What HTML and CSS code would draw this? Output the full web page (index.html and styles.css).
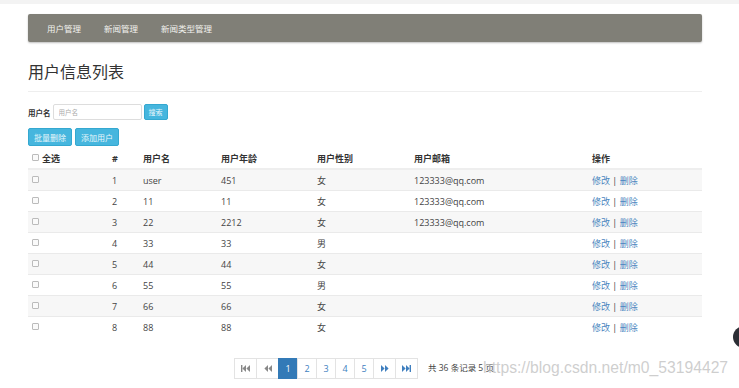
FILE: index.html
```html
<!DOCTYPE html>
<html lang="zh-CN">
<head>
    <meta charset="UTF-8">
    <title>用户信息列表</title>
    <link rel="stylesheet" href="styles.css">
</head>
<body>
    <div class="topband"></div>
    <div class="container">
        <div class="navbar">
            <a href="#">用户管理</a>
            <a href="#">新闻管理</a>
            <a href="#">新闻类型管理</a>
        </div>

        <h1>用户信息列表</h1>

        <div class="search-row">
            <label>用户名</label>
            <input type="text" class="search-input" placeholder="用户名">
            <button class="btn btn-info btn-small">搜索</button>
        </div>

        <div class="btn-row">
            <button class="btn btn-info">批量删除</button>
            <button class="btn btn-info">添加用户</button>
        </div>

        <table class="user-table">
            <thead>
                <tr>
                    <th class="col-check"><span class="check"></span>全选</th>
                    <th class="col-num">#</th>
                    <th class="col-name">用户名</th>
                    <th class="col-age">用户年龄</th>
                    <th class="col-sex">用户性别</th>
                    <th class="col-mail">用户邮箱</th>
                    <th>操作</th>
                </tr>
            </thead>
            <tbody id="rows"></tbody>
        </table>

        <div class="pager-row">
            <ul class="pagination">
                <li><a href="#" class="muted"><svg width="9" height="7" viewBox="0 0 9 7"><rect x="0" y="0" width="1.4" height="7"/><polygon points="5,0 5,7 1.4,3.5"/><polygon points="9,0 9,7 5.4,3.5"/></svg></a></li>
                <li><a href="#" class="muted"><svg width="8" height="7" viewBox="0 0 8 7"><polygon points="4,0 4,7 0.4,3.5"/><polygon points="8,0 8,7 4.4,3.5"/></svg></a></li>
                <li><a href="#" class="active">1</a></li>
                <li><a href="#">2</a></li>
                <li><a href="#">3</a></li>
                <li><a href="#">4</a></li>
                <li><a href="#">5</a></li>
                <li><a href="#"><svg width="8" height="7" viewBox="0 0 8 7"><polygon points="0,0 0,7 3.6,3.5"/><polygon points="4,0 4,7 7.6,3.5"/></svg></a></li>
                <li><a href="#"><svg width="9" height="7" viewBox="0 0 9 7"><polygon points="0,0 0,7 3.6,3.5"/><polygon points="4,0 4,7 7.6,3.5"/><rect x="7.6" y="0" width="1.4" height="7"/></svg></a></li>
            </ul>
            <span class="pager-info">共 36 条记录 5 页</span>
        </div>
    </div>

    <div class="watermark">https://blog.csdn.net/m0_53194427</div>
    <div class="float-btn"></div>

    <script>
        const users = [
            [1, 'user', '451', '女', '123333@qq.com'],
            [2, '11', '11', '女', '123333@qq.com'],
            [3, '22', '2212', '女', '123333@qq.com'],
            [4, '33', '33', '男', ''],
            [5, '44', '44', '女', ''],
            [6, '55', '55', '男', ''],
            [7, '66', '66', '女', ''],
            [8, '88', '88', '女', '']
        ];

        document.getElementById('rows').innerHTML = users.map(u => `
            <tr>
                <td class="col-check"><span class="check"></span></td>
                <td>${u[0]}</td>
                <td>${u[1]}</td>
                <td>${u[2]}</td>
                <td>${u[3]}</td>
                <td>${u[4]}</td>
                <td><a href="#">修改</a> | <a href="#">删除</a></td>
            </tr>
        `).join('');
    </script>
</body>
</html>
```

FILE: styles.css
```css
body {
    margin: 0;
    font-family: "Open Sans", "Noto Sans CJK SC", sans-serif;
    font-size: 9px;
    color: #444;
    background: #fff;
    position: relative;
    height: 388px;
    overflow: hidden;
}
.topband {
    height: 4px;
    background: #f3f3f3;
}
.container {
    width: 674px;
    margin-left: 28px;
}
.navbar {
    margin-top: 10px;
    height: 28px;
    background: #807f77;
    border-radius: 2px;
    box-shadow: 0 1px 2px rgba(0,0,0,0.25);
    display: flex;
    align-items: center;
    padding-left: 19px;
    gap: 23px;
}
.navbar a {
    color: #f2f2ee;
    text-decoration: none;
    font-size: 8.5px;
}
h1 {
    margin: 20px 0 0;
    font-size: 16px;
    font-weight: normal;
    line-height: 20px;
    color: #333;
    padding-bottom: 9px;
    border-bottom: 1px solid #eee;
}
.search-row {
    margin-top: 12px;
    display: flex;
    align-items: center;
    height: 16px;
}
.search-row label {
    font-weight: bold;
    color: #333;
    font-size: 7.5px;
    margin-right: 2px;
}
.search-input {
    width: 89px;
    height: 16px;
    box-sizing: border-box;
    border: 1px solid #ddd;
    border-radius: 2px;
    padding: 0 5px;
    font-size: 6.5px;
    font-family: inherit;
    margin-right: 2px;
}
.search-input::placeholder {
    color: #aaa;
}
.btn {
    border: 1px solid #34a8d0;
    background: #46b6de;
    color: #e9f6fb;
    border-radius: 2px;
    font-family: inherit;
    font-size: 8px;
    height: 18px;
    width: 44px;
    padding: 0;
    cursor: pointer;
}
.btn-small {
    height: 16px;
    width: 24px;
    font-size: 7px;
}
.btn-row {
    margin-top: 8px;
    display: flex;
    gap: 3px;
}
.user-table {
    width: 100%;
    border-collapse: collapse;
    margin-top: 2px;
}
.user-table th {
    text-align: left;
    font-weight: bold;
    color: #333;
    height: 20px;
    padding: 0;
    border-bottom: 2px solid #eee;
}
.user-table td {
    height: 20px;
    padding: 0;
    border-top: 1px solid #eaeaea;
}
.user-table tbody tr:nth-child(odd) {
    background: #f7f7f7;
}
.col-check {
    width: 80px;
    padding-left: 4px !important;
}
.col-num { width: 31px; }
.col-name { width: 78px; }
.col-age { width: 96px; }
.col-sex { width: 97px; }
.col-mail { width: 178px; }
.check {
    display: inline-block;
    width: 5px;
    height: 5px;
    border: 1px solid #bbb;
    border-radius: 1px;
    background: #fafafa;
    margin-right: 3px;
    vertical-align: 1px;
}
.user-table a {
    color: #4a86c0;
    text-decoration: none;
}
.pager-row {
    margin-top: 21px;
    display: flex;
    align-items: center;
    padding-left: 207px;
}
.pagination {
    list-style: none;
    margin: 0;
    padding: 0;
    display: flex;
}
.pagination a {
    display: flex;
    align-items: center;
    justify-content: center;
    width: 18px;
    height: 19px;
    border: 1px solid #e3e3e3;
    margin-left: -1px;
    color: #3f7fbf;
    text-decoration: none;
    font-size: 9px;
    fill: #3f7fbf;
}
.pagination li:first-child a,
.pagination li:nth-child(2) a,
.pagination li:nth-child(8) a,
.pagination li:nth-child(9) a {
    width: 21px;
}
.pagination a.muted {
    fill: #888;
}
.pagination a.active {
    background: #337ab7;
    border-color: #337ab7;
    color: #fff;
}
.pager-info {
    margin-left: 10px;
    color: #444;
    font-size: 8.5px;
    margin-top: -4px;
}
.watermark {
    position: absolute;
    left: 483px;
    top: 359px;
    font-family: "Liberation Sans", Arial, sans-serif;
    font-size: 15.7px;
    color: rgba(190, 190, 190, 0.75);
    pointer-events: none;
    white-space: nowrap;
}
.float-btn {
    position: absolute;
    left: 733px;
    top: 326px;
    width: 22px;
    height: 22px;
    border-radius: 50%;
    background: #2c2f36;
}
```
